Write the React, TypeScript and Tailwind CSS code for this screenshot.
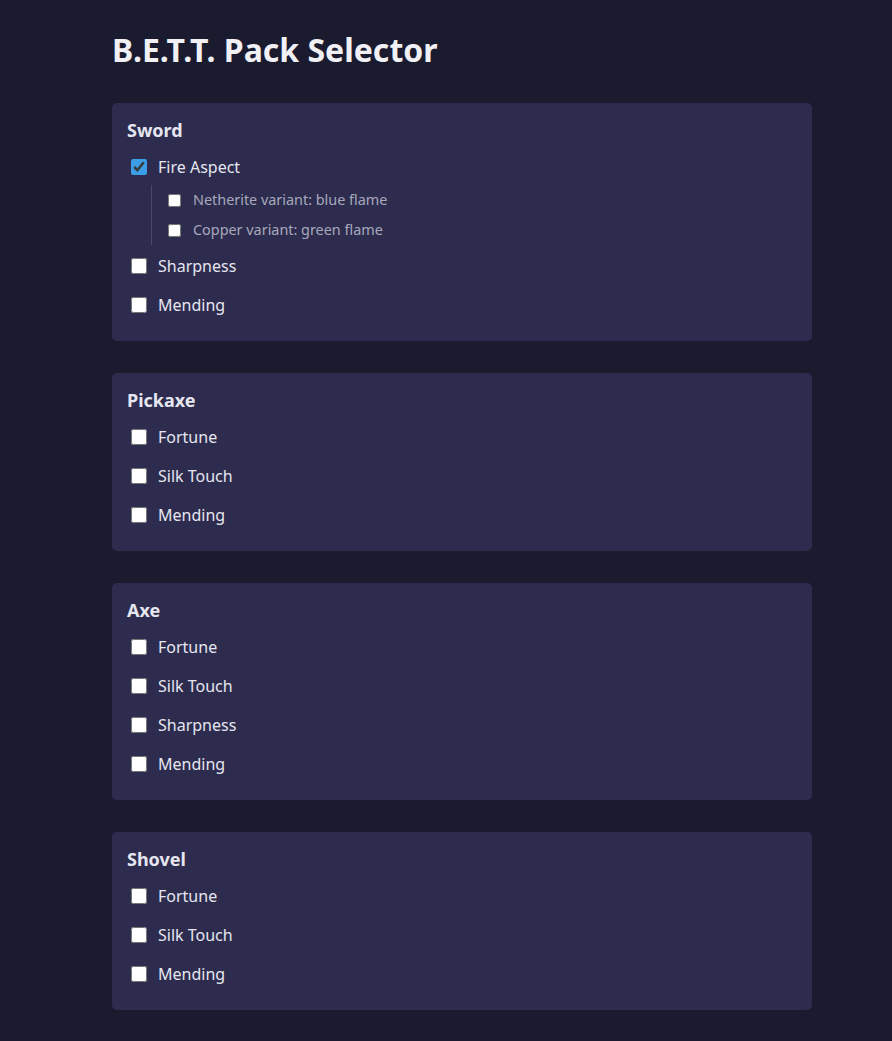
import { useState } from "react";

interface Option {
  id: string;
  label: string;
  variants?: Array<{ id: string; label: string }>;
}

interface Tool {
  name: string;
  options: Option[];
}

const tools: Tool[] = [
  {
    name: "Sword",
    options: [
      {
        id: "sword-fire",
        label: "Fire Aspect",
        variants: [
          { id: "sword-fire-netherite", label: "Netherite variant: blue flame" },
          { id: "sword-fire-copper", label: "Copper variant: green flame" },
        ],
      },
      { id: "sword-sharpness", label: "Sharpness" },
      { id: "sword-mending", label: "Mending" },
    ],
  },
  {
    name: "Pickaxe",
    options: [
      { id: "pickaxe-fortune", label: "Fortune" },
      { id: "pickaxe-silk", label: "Silk Touch" },
      { id: "pickaxe-mending", label: "Mending" },
    ],
  },
  {
    name: "Axe",
    options: [
      { id: "axe-fortune", label: "Fortune" },
      { id: "axe-silk", label: "Silk Touch" },
      { id: "axe-sharpness", label: "Sharpness" },
      { id: "axe-mending", label: "Mending" },
    ],
  },
  {
    name: "Shovel",
    options: [
      { id: "shovel-fortune", label: "Fortune" },
      { id: "shovel-silk", label: "Silk Touch" },
      { id: "shovel-mending", label: "Mending" },
    ],
  },
];

const App = () => {
  const [checked, setChecked] = useState<Record<string, boolean>>({
    "sword-fire": true,
  });

  const toggle = (id: string) => {
    setChecked((prev) => ({ ...prev, [id]: !prev[id] }));
  };

  return (
    <div className="min-h-screen bg-[#1b1b2f] text-[#e6e6f0] font-['Noto_Sans',sans-serif]">
      <div className="w-[700px] ml-[112px] pt-[28px] pb-[30px]">
        <h1 className="text-[32px] font-bold leading-[44px] text-[#f0f0f5] mb-[31px]">
          B.E.T.T. Pack Selector
        </h1>

        <div className="flex flex-col gap-8">
          {tools.map((tool) => (
            <div
              key={tool.name}
              className="bg-[#2d2c4e] rounded-[5px] px-[15px] pt-4 pb-[17px]"
            >
              <h2 className="text-lg font-bold leading-[22px] mb-[6px]">
                {tool.name}
              </h2>
              {tool.options.map((opt) => (
                <div key={opt.id}>
                  <label className="flex items-center h-[39px] cursor-pointer">
                    <input
                      type="checkbox"
                      className="w-4 h-4 ml-1 mr-[11px] accent-[#3b9ee6]"
                      checked={!!checked[opt.id]}
                      onChange={() => toggle(opt.id)}
                    />
                    <span className="text-base">{opt.label}</span>
                  </label>
                  {opt.variants && (
                    <div className="ml-6 -mt-[1px] mb-[1px] border-l border-[#4a4a66] pl-4">
                      {opt.variants.map((v) => (
                        <label
                          key={v.id}
                          className="flex items-center h-[30px] cursor-pointer"
                        >
                          <input
                            type="checkbox"
                            className="w-[13px] h-[13px] mr-3 accent-[#3b9ee6]"
                            checked={!!checked[v.id]}
                            onChange={() => toggle(v.id)}
                          />
                          <span className="text-[14.4px] text-[#a8a8bc]">
                            {v.label}
                          </span>
                        </label>
                      ))}
                    </div>
                  )}
                </div>
              ))}
            </div>
          ))}
        </div>
      </div>
    </div>
  );
};

export default App;
